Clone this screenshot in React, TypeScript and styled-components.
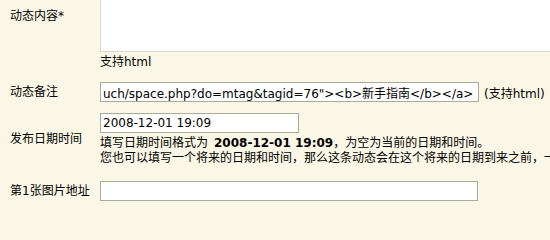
import styled, { createGlobalStyle } from 'styled-components';

const GlobalStyle = createGlobalStyle`
  html, body {
    margin: 0;
    padding: 0;
    background: #faf7e6;
    overflow: hidden;
  }
  body {
    font-family: "DejaVu Sans", Verdana, "Noto Sans CJK SC", sans-serif;
    font-size: 12px;
    color: #000;
  }
`;

const Form = styled.div`
  width: 550px;
  height: 211px;
  overflow: hidden;
  background: #faf7e6;
`;

const Row = styled.div<{ $pad?: number }>`
  display: flex;
  align-items: center;
  padding-top: ${(p) => p.$pad ?? 0}px;
`;

const Label = styled.div<{ $top?: boolean }>`
  flex: 0 0 100px;
  padding-left: 10px;
  box-sizing: border-box;
  line-height: 15px;
  white-space: nowrap;
  align-self: ${(p) => (p.$top ? 'flex-start' : 'center')};
  padding-top: ${(p) => (p.$top ? '9px' : '0')};
`;

const Field = styled.div`
  flex: 1;
  display: flex;
  flex-direction: column;
  min-width: 0;
  white-space: nowrap;
`;

const Inline = styled.div`
  display: flex;
  align-items: center;
  gap: 5px;
`;

const TextArea = styled.textarea`
  width: 470px;
  height: 52px;
  box-sizing: border-box;
  border: 1px solid #dcdacd;
  border-top: none;
  background: #fff;
  resize: none;
  margin: 0;
  padding: 2px;
  font: inherit;
`;

const Input = styled.input<{ $w: number }>`
  width: ${(p) => p.$w}px;
  height: 20px;
  box-sizing: border-box;
  border: 1px solid #a9ad97;
  background: #fff;
  margin: 0;
  padding: 0 2px;
  font-family: "DejaVu Sans", Verdana, "Noto Sans CJK SC", sans-serif;
  font-size: 12px;
  color: #000;
  outline: none;
`;

const Hint = styled.div<{ $gap?: number }>`
  line-height: 15px;
  margin-top: ${(p) => p.$gap ?? 0}px;
`;

const Strong = styled.b`
  font-weight: bold;
  margin-left: 6px;
`;

export default function App() {
  return (
    <>
      <GlobalStyle />
      <Form>
        <Row>
          <Label $top>动态内容*</Label>
          <Field>
            <TextArea defaultValue="" />
            <Hint $gap={3}>支持html</Hint>
          </Field>
        </Row>

        <Row $pad={12}>
          <Label>动态备注</Label>
          <Field>
            <Inline>
              <Input
                $w={379}
                readOnly
                value={'uch/space.php?do=mtag&tagid=76"><b>新手指南</b></a>'}
              />
              <span>(支持html)</span>
            </Inline>
          </Field>
        </Row>

        <Row $pad={11}>
          <Label>发布日期时间</Label>
          <Field>
            <Input $w={199} readOnly value="2008-12-01 19:09" />
            <Hint $gap={3}>
              填写日期时间格式为<Strong>2008-12-01 19:09</Strong>，为空为当前的日期和时间。
            </Hint>
            <Hint>
              您也可以填写一个将来的日期和时间，那么这条动态会在这个将来的日期到来之前，一直显示在最前面。
            </Hint>
          </Field>
        </Row>

        <Row $pad={15}>
          <Label>第1张图片地址</Label>
          <Field>
            <Input $w={378} readOnly value="" />
          </Field>
        </Row>
      </Form>
    </>
  );
}
